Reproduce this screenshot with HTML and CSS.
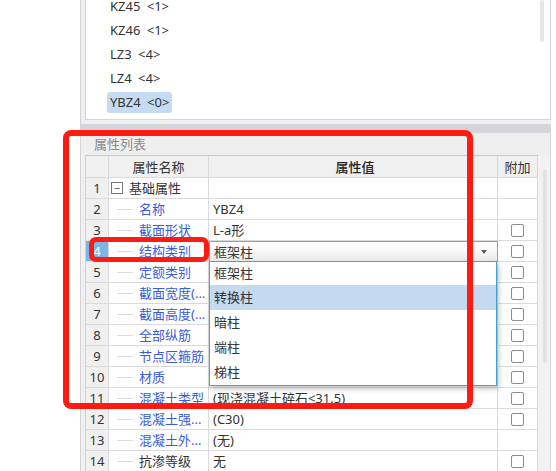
FILE: index.html
```html
<!DOCTYPE html>
<html lang="zh-CN">
<head>
<meta charset="utf-8">
<title>属性列表</title>
<link rel="stylesheet" href="styles.css">
</head>
<body>
<div class="app">
  <div class="leftpane"></div>
  <div class="panel">
    <div class="listbox">
      <ul class="items">
        <li><span class="item">KZ45 &lt;1&gt;</span></li>
        <li><span class="item">KZ46 &lt;1&gt;</span></li>
        <li><span class="item">LZ3 &lt;4&gt;</span></li>
        <li><span class="item">LZ4 &lt;4&gt;</span></li>
        <li><span class="item selected">YBZ4 &lt;0&gt;</span></li>
      </ul>
      <div class="listscroll"></div>
    </div>
    <div class="gap"></div>
    <div class="splitter"></div>
    <div class="titlebar">属性列表</div>
    <div class="tablewrap">
      <div class="grid">
        <div class="row head">
          <div class="c num"></div>
          <div class="c name center">属性名称</div>
          <div class="c val center strong">属性值</div>
          <div class="c add center">附加</div>
        </div>
        <div class="row">
          <div class="c num">1</div>
          <div class="c name"><span class="toggle">−</span><span class="black">基础属性</span></div>
          <div class="c val"></div>
          <div class="c add"></div>
        </div>
        <div class="row">
          <div class="c num">2</div>
          <div class="c name"><span class="branch"></span>名称</div>
          <div class="c val">YBZ4</div>
          <div class="c add"></div>
        </div>
        <div class="row">
          <div class="c num">3</div>
          <div class="c name"><span class="branch"></span>截面形状</div>
          <div class="c val">L-a形</div>
          <div class="c add"><span class="cb"></span></div>
        </div>
        <div class="row">
          <div class="c num active">4</div>
          <div class="c name"><span class="branch"></span>结构类别</div>
          <div class="c val combo"><span class="combo-text">框架柱</span><span class="arrow"></span></div>
          <div class="c add"><span class="cb"></span></div>
        </div>
        <div class="row">
          <div class="c num">5</div>
          <div class="c name"><span class="branch"></span>定额类别</div>
          <div class="c val"></div>
          <div class="c add"><span class="cb"></span></div>
        </div>
        <div class="row">
          <div class="c num">6</div>
          <div class="c name"><span class="branch"></span>截面宽度(...</div>
          <div class="c val"></div>
          <div class="c add"><span class="cb"></span></div>
        </div>
        <div class="row">
          <div class="c num">7</div>
          <div class="c name"><span class="branch"></span>截面高度(...</div>
          <div class="c val"></div>
          <div class="c add"><span class="cb"></span></div>
        </div>
        <div class="row">
          <div class="c num">8</div>
          <div class="c name"><span class="branch"></span>全部纵筋</div>
          <div class="c val"></div>
          <div class="c add"><span class="cb"></span></div>
        </div>
        <div class="row">
          <div class="c num">9</div>
          <div class="c name"><span class="branch"></span>节点区箍筋</div>
          <div class="c val"></div>
          <div class="c add"><span class="cb"></span></div>
        </div>
        <div class="row">
          <div class="c num">10</div>
          <div class="c name"><span class="branch"></span>材质</div>
          <div class="c val"></div>
          <div class="c add"><span class="cb"></span></div>
        </div>
        <div class="row">
          <div class="c num">11</div>
          <div class="c name"><span class="branch"></span>混凝土类型</div>
          <div class="c val">(现浇混凝土碎石&lt;31.5)</div>
          <div class="c add"><span class="cb"></span></div>
        </div>
        <div class="row">
          <div class="c num">12</div>
          <div class="c name"><span class="branch"></span>混凝土强...</div>
          <div class="c val">(C30)</div>
          <div class="c add"><span class="cb"></span></div>
        </div>
        <div class="row">
          <div class="c num">13</div>
          <div class="c name"><span class="branch"></span>混凝土外...</div>
          <div class="c val">(无)</div>
          <div class="c add"></div>
        </div>
        <div class="row">
          <div class="c num">14</div>
          <div class="c name"><span class="branch"></span><span class="black">抗渗等级</span></div>
          <div class="c val">无</div>
          <div class="c add"><span class="cb"></span></div>
        </div>
      </div>
      <div class="tscroll"><div class="thumb"></div></div>
    </div>
  </div>
</div>

<ul class="dropdown">
  <li class="opt first">框架柱</li>
  <li class="opt hl">转换柱</li>
  <li class="opt">暗柱</li>
  <li class="opt">端柱</li>
  <li class="opt">梯柱</li>
</ul>

<div class="redbox outer"></div>
<div class="redbox inner"></div>
</body>
</html>
```

FILE: styles.css
```css
* { box-sizing: border-box; }

html, body {
  margin: 0;
  padding: 0;
}

body {
  width: 556px;
  height: 471px;
  overflow: hidden;
  position: relative;
  background: #ffffff;
  font-family: "Noto Sans", "Noto Sans CJK SC", sans-serif;
  font-size: 13px;
  color: #333333;
}

.app {
  display: flex;
  height: 471px;
}

.leftpane {
  width: 80px;
  flex: none;
  background: #ffffff;
}

.panel {
  width: 471px;
  flex: none;
  border-left: 1px solid #d4d4d4;
  background: #f0f0f0;
  display: flex;
  flex-direction: column;
  overflow: hidden;
}

.listbox {
  position: relative;
  margin-left: 4px;
  height: 120px;
  flex: none;
  background: #ffffff;
  border-left: 1px solid #d6d6d6;
  border-right: 1px solid #d6d6d6;
  border-bottom: 1px solid #d6d6d6;
  overflow: hidden;
}

.items {
  list-style: none;
  margin: -4px 0 0 0;
  padding: 0 0 0 21px;
}

.items li {
  height: 24px;
}

.item {
  display: inline-block;
  height: 21px;
  line-height: 21px;
  padding: 0 3px;
  border-radius: 3px;
  word-spacing: 3px;
  color: #333333;
}

.item.selected {
  background: #c4dbf1;
}

.listscroll {
  position: absolute;
  top: 0;
  right: 6px;
  width: 4px;
  height: 42px;
  border-radius: 2px;
  background: #e6e6e6;
}

.gap {
  height: 4px;
  flex: none;
}

.splitter {
  height: 9px;
  flex: none;
  background: #d3d5da;
}

.titlebar {
  height: 22px;
  flex: none;
  line-height: 22px;
  padding-left: 13px;
  color: #8a8a8a;
  background: #efefef;
  border-right: 1px solid #d6d6d6;
}

.tablewrap {
  display: flex;
  margin-left: 4px;
  flex: 1;
}

.grid {
  width: 453px;
  flex: none;
  border-left: 1px solid #d0d0d0;
  border-top: 1px solid #c8c8c8;
  background: #ffffff;
}

.row {
  display: grid;
  grid-template-columns: 23px 100px 289px 40px;
  height: 21px;
}

.row.head {
  height: 22px;
}

.c {
  border-right: 1px solid #dadada;
  border-bottom: 1px solid #dadada;
  white-space: nowrap;
  overflow: hidden;
  display: flex;
  align-items: center;
  line-height: 20px;
}

.head .c {
  background: #f0f0f0;
  color: #333333;
}

.head .strong {
  color: #222222;
  font-weight: 500;
}

.center {
  justify-content: center;
}

.num {
  background: #f0f0f0;
  justify-content: center;
  color: #333333;
}

.num.active {
  background: #7db5e9;
  color: #ffffff;
}

.name {
  color: #3a5be0;
}

.black {
  color: #333333;
}

.branch {
  display: inline-block;
  width: 16px;
  height: 1px;
  margin-left: 8px;
  margin-right: 6px;
  background: #dcdcdc;
  flex: none;
}

.toggle {
  display: inline-flex;
  align-items: center;
  justify-content: center;
  width: 12px;
  height: 12px;
  margin-left: 2px;
  margin-right: 6px;
  border: 1px solid #777777;
  font-size: 11px;
  line-height: 10px;
  color: #444444;
  flex: none;
}

.val {
  padding-left: 4px;
  color: #333333;
}

.combo {
  position: relative;
  border: 1px solid #6fa8e0;
  background: linear-gradient(#ffffff, #fbfbfb 40%, #e9e9e9);
  justify-content: space-between;
  padding-right: 10px;
}

.arrow {
  width: 0;
  height: 0;
  border-left: 3.5px solid transparent;
  border-right: 3.5px solid transparent;
  border-top: 4px solid #555a66;
}

.add {
  justify-content: center;
}

.cb {
  display: block;
  width: 13px;
  height: 13px;
  border: 1px solid #8c8c8c;
  border-radius: 2px;
  background: #ffffff;
}

.tscroll {
  position: relative;
  width: 13px;
  flex: none;
  background: #f2f2f2;
  border-right: 1px solid #d6d6d6;
}

.thumb {
  margin: 14px 0 0 5px;
  width: 4px;
  height: 194px;
  border-radius: 2px;
  background: #e2e2e2;
}

.dropdown {
  position: absolute;
  left: 209px;
  top: 261px;
  width: 288px;
  height: 125px;
  margin: 0;
  padding: 0;
  list-style: none;
  background: #ffffff;
  border: 1px solid #3fa4d6;
  box-shadow: 2px 3px 5px rgba(0, 0, 0, 0.22);
}

.opt {
  height: 25px;
  line-height: 25px;
  padding-left: 4px;
  color: #333333;
}

.opt.first {
  height: 23px;
  line-height: 22px;
}

.opt.hl {
  background: #c4daf0;
}

.redbox {
  position: absolute;
  border: 6px solid #fe1b12;
  border-radius: 8px;
  pointer-events: none;
}

.redbox.outer {
  left: 63px;
  top: 130px;
  width: 410px;
  height: 279px;
}

.redbox.inner {
  left: 89px;
  top: 237px;
  width: 120px;
  height: 25px;
  border-width: 5px;
  border-radius: 7px;
}
```
